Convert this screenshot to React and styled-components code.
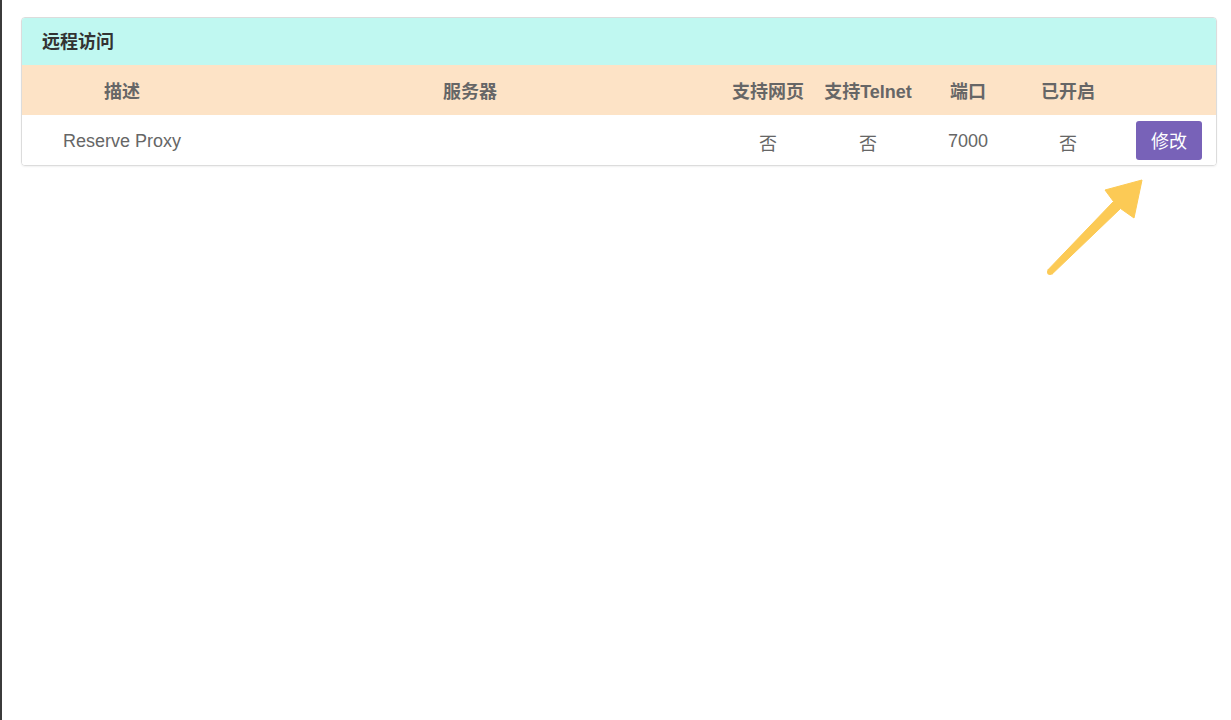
import styled, { createGlobalStyle } from "styled-components"

const Global = createGlobalStyle`
  html, body { margin: 0; padding: 0; background: #fff; }
  body {
    font-family: "Liberation Sans", "Noto Sans CJK SC", sans-serif;
    font-size: 18px;
  }
`

const Page = styled.div`
  position: relative;
  min-height: 100vh;
  box-sizing: border-box;
  border-left: 2px solid #3b3b3b;
  padding: 17px 14px 0 19px;
`

const Panel = styled.section`
  border: 1px solid #dcdcdc;
  border-radius: 4px;
  overflow: hidden;
  box-shadow: 0 1px 2px rgba(0,0,0,0.06);
`

const Title = styled.h3`
  margin: 0;
  height: 47px;
  box-sizing: border-box;
  padding: 0 0 3px 20px;
  display: flex;
  align-items: center;
  background: #c0f8f1;
  color: #333;
  font-size: 18px;
  font-weight: bold;
`

const Row = styled.div`
  display: grid;
  grid-template-columns: 200px 1fr 100px 100px 100px 100px 98px;
  align-items: center;
  height: 50px;
  box-sizing: border-box;
  padding-top: ${props => props.head ? "0" : "3px"};
  background: ${props => props.head ? "#fde3c6" : "#fff"};
  color: #666;
  font-weight: ${props => props.head ? "bold" : "normal"};
`

const Cell = styled.div`
  text-align: center;
  white-space: nowrap;
`

const EditButton = styled.button`
  justify-self: center;
  margin: -3px 0 0 4px;
  width: 66px;
  height: 39px;
  border: none;
  border-radius: 3px;
  background: #7862b8;
  color: #fff;
  font-family: inherit;
  font-size: 18px;
  cursor: pointer;
`

const Arrow = styled.svg`
  position: absolute;
  left: 1040px;
  top: 170px;
`

const columns = ["描述", "服务器", "支持网页", "支持Telnet", "端口", "已开启", ""]

export default function App() {
  const row = { name: "Reserve Proxy", server: "", web: "否", telnet: "否", port: 7000, enabled: "否" }

  return (
    <>
      <Global />
      <Page>
        <Panel>
          <Title>远程访问</Title>
          <Row head>
            {columns.map((c, i) => <Cell key={i}>{c}</Cell>)}
          </Row>
          <Row>
            <Cell>{row.name}</Cell>
            <Cell>{row.server}</Cell>
            <Cell>{row.web}</Cell>
            <Cell>{row.telnet}</Cell>
            <Cell>{row.port}</Cell>
            <Cell>{row.enabled}</Cell>
            <EditButton>修改</EditButton>
          </Row>
        </Panel>
        <Arrow width="110" height="110" viewBox="0 0 110 110">
          <circle cx="8" cy="102" r="3" fill="#fcca55" />
          <polygon
            points="5.9,99.9 71.5,31.5 63,20 100,10 92,48 78.5,38.5 10.1,104.1"
            fill="#fcca55"
            stroke="#fcca55"
            strokeWidth="1"
            strokeLinejoin="round"
          />
        </Arrow>
      </Page>
    </>
  )
}
